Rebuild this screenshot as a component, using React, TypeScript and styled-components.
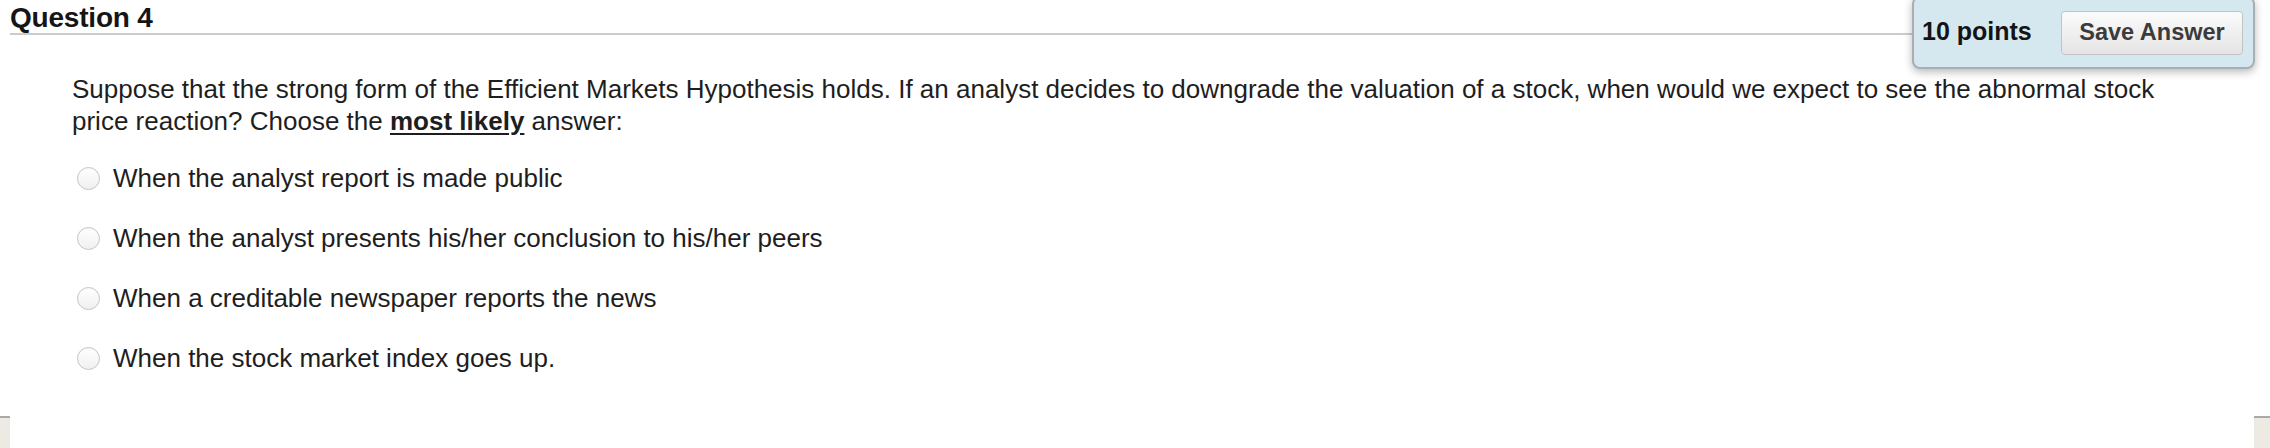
import styled, { createGlobalStyle } from 'styled-components';

const GlobalStyle = createGlobalStyle`
  html, body {
    margin: 0;
    padding: 0;
    background: #ffffff;
  }
  body {
    font-family: 'Liberation Sans', Arial, Helvetica, sans-serif;
    color: #1e1e1e;
  }
`;

const answers = [
  'When the analyst report is made public',
  'When the analyst presents his/her conclusion to his/her peers',
  'When a creditable newspaper reports the news',
  'When the stock market index goes up.',
];

export default function App() {
  return (
    <>
      <GlobalStyle />
      <Page>
        <Header>
          <Title>Question 4</Title>
        </Header>

        <PointsBox>
          <Points>10 points</Points>
          <SaveButton type="button">Save Answer</SaveButton>
        </PointsBox>

        <Content>
          <Prompt>
            Suppose that the strong form of the Efficient Markets Hypothesis holds. If an analyst
            decides to downgrade the valuation of a stock, when would we expect to see the abnormal
            stock price reaction? Choose the <Strong>most likely</Strong> answer:
          </Prompt>

          <Options>
            {answers.map((answer) => (
              <Option key={answer}>
                <Radio type="radio" name="q4" />
                <OptionLabel>{answer}</OptionLabel>
              </Option>
            ))}
          </Options>
        </Content>

        <Footer>
          <FooterEdge $width={10} />
          <FooterFill />
          <FooterEdge $width={16} />
        </Footer>
      </Page>
    </>
  );
}

const Page = styled.div`
  position: relative;
  height: 448px;
  display: flex;
  flex-direction: column;
  overflow: hidden;
`;

const Header = styled.div`
  margin-left: 10px;
  margin-right: 358px;
  padding-top: 2px;
  border-bottom: 2px solid #cccccc;
`;

const Title = styled.h2`
  margin: 0;
  font-size: 28px;
  line-height: 31px;
  font-weight: bold;
  color: #151515;
  letter-spacing: -0.2px;
`;

const PointsBox = styled.div`
  position: absolute;
  top: -4px;
  right: 15px;
  width: 343px;
  height: 73px;
  box-sizing: border-box;
  padding: 0 10px 0 8px;
  display: flex;
  align-items: center;
  justify-content: space-between;
  background: #d6e8ef;
  border: 2px solid #a7afb3;
  border-radius: 8px;
  box-shadow: 0 3px 9px rgba(0, 0, 0, 0.28);
`;

const Points = styled.span`
  font-size: 25px;
  font-weight: bold;
  color: #141414;
  padding-bottom: 3px;
`;

const SaveButton = styled.button`
  width: 182px;
  height: 44px;
  padding: 0;
  font-family: 'Liberation Sans', Arial, sans-serif;
  font-size: 23.5px;
  font-weight: bold;
  color: #3b3b3b;
  background: linear-gradient(#fbfbfb, #e4e4e4);
  border: 1px solid #c3c3c3;
  border-radius: 4px;
  cursor: pointer;
`;

const Content = styled.div`
  flex: 1;
  padding: 38px 60px 0 72px;
`;

const Prompt = styled.p`
  margin: 0;
  font-size: 26px;
  line-height: 32px;
  color: #1e1e1e;
`;

const Strong = styled.strong`
  font-weight: bold;
  text-decoration: underline;
  text-underline-offset: 3px;
`;

const Options = styled.div`
  margin-top: 26px;
  display: flex;
  flex-direction: column;
  gap: 30px;
`;

const Option = styled.label`
  display: flex;
  align-items: center;
  height: 30px;
  cursor: pointer;
`;

const Radio = styled.input`
  appearance: none;
  margin: 0 13px 0 5px;
  width: 23px;
  height: 23px;
  border-radius: 50%;
  border: 1px solid #c4c4c4;
  background: linear-gradient(#ffffff, #f0f0f0);
  box-shadow: inset 0 1px 1px rgba(0, 0, 0, 0.03);
  flex-shrink: 0;
`;

const OptionLabel = styled.span`
  font-size: 26px;
  line-height: 30px;
  color: #1e1e1e;
`;

const Footer = styled.div`
  height: 32px;
  display: flex;
`;

const FooterEdge = styled.div<{ $width: number }>`
  width: ${(p) => p.$width}px;
  background: #edeae3;
  border-top: 2px solid #a9a9a9;
`;

const FooterFill = styled.div`
  flex: 1;
  background: #ffffff;
`;
